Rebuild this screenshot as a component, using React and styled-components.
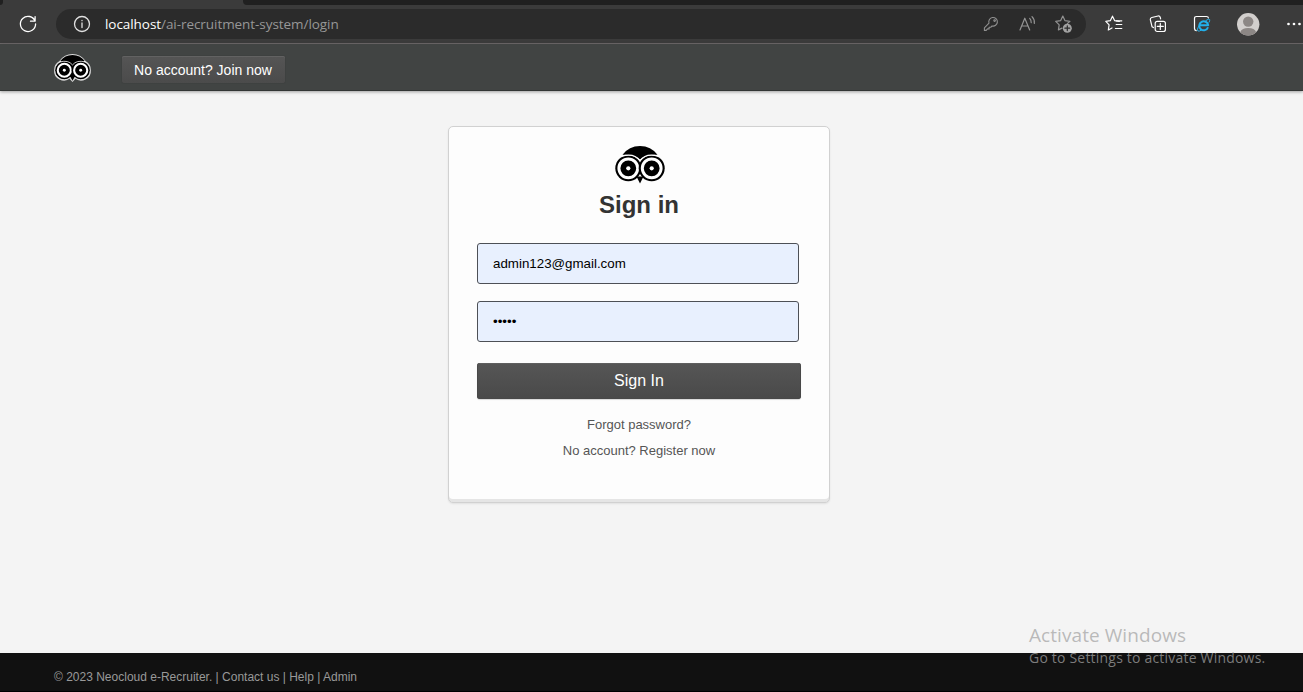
import React from "react";
import styled, { createGlobalStyle } from "styled-components";

const GlobalStyle = createGlobalStyle`
  * { box-sizing: border-box; }
  body { margin: 0; background: #f4f4f4; font-family: "Liberation Sans", Arial, sans-serif; overflow: hidden; }
`;

const Page = styled.div`
  position: relative;
  display: flex;
  flex-direction: column;
  width: 1303px;
  height: 692px;
  overflow: hidden;
`;

const TabStrip = styled.div`
  height: 5px;
  flex: none;
  display: flex;
  background: #3b3b3b;
`;

const InactiveTab = styled.div`
  width: ${(p) => p.$width};
  margin-left: ${(p) => (p.$last ? "auto" : 0)};
  background: #202020;
  border-radius: ${(p) => (p.$last ? "0 0 0 4px" : "0 0 3px 0")};
`;

const Toolbar = styled.div`
  height: 39px;
  flex: none;
  display: flex;
  align-items: center;
  padding-left: 19px;
  background: #3b3b3b;
  border-bottom: 1px solid #6d696a;
`;

const AddressBar = styled.div`
  width: 1030px;
  height: 30px;
  margin-left: 19px;
  padding: 0 13px 0 17px;
  display: flex;
  align-items: center;
  border-radius: 15px;
  background: #2b2b2b;
`;

const Url = styled.div`
  flex: 1;
  margin-left: 14px;
  font: 13.5px/20px "Open Sans", sans-serif;
  letter-spacing: -0.06px;
  color: #979797;
  white-space: nowrap;
`;

const Host = styled.span`
  color: #fff;
`;

const BarIcons = styled.div`
  display: flex;
  align-items: center;
  gap: 18px;
`;

const Actions = styled.div`
  display: flex;
  align-items: center;
  margin-left: 19px;
  gap: 26px;
`;

const Glyph = styled.svg`
  display: block;
  flex: none;
  overflow: visible;
  fill: none;
  stroke: ${(p) => p.$color || "#fff"};
  stroke-width: ${(p) => p.$weight || 1.2};
  stroke-linecap: round;
  stroke-linejoin: round;
`;

const OwlMark = styled.svg`
  display: block;
  flex: none;
  overflow: visible;
`;

const Header = styled.header`
  height: 47px;
  flex: none;
  display: flex;
  align-items: flex-start;
  padding: 11px 55px 0;
  background: #414443;
  border-bottom: 1px solid #333635;
  box-shadow: 0 1px 3px rgba(0, 0, 0, 0.35);
`;

const JoinButton = styled.button`
  width: 163px;
  height: 27px;
  margin: 1px 0 0 31.5px;
  padding: 0;
  border: 0;
  border-radius: 2px;
  background: linear-gradient(#555, #4b4b4b);
  box-shadow: inset 0 1px 0 #626262, 0 0 1px #303030;
  color: #fff;
  font: 14px/28px "Liberation Sans", Arial, sans-serif;
`;

const Main = styled.main`
  flex: 1;
  display: flex;
  justify-content: center;
  align-items: flex-start;
  padding: 35px 25px 0 0;
`;

const Card = styled.form`
  width: 382px;
  height: 377px;
  padding: 19px 28px 0;
  display: flex;
  flex-direction: column;
  align-items: center;
  background: #fdfdfd;
  border: 1px solid #d1d1d1;
  border-radius: 5px;
  box-shadow: inset 0 -3px 0 #e5e5e5, 0 1px 2px rgba(0, 0, 0, 0.08);
`;

const CardLogo = styled.div`
  padding-left: 1px;
`;

const Title = styled.h1`
  margin: 7px 0 0;
  font-size: 24px;
  line-height: 28px;
  color: #333;
`;

const Field = styled.input`
  align-self: flex-start;
  width: 322px;
  height: 41px;
  flex: none;
  margin: ${(p) => p.$top} 0 0;
  padding: 0 15px;
  border: 1px solid #4d5056;
  border-radius: 3px;
  outline: 0;
  background: #e8f0fe;
  color: #000;
  font: 13.333px "Liberation Sans", Arial, sans-serif;
`;

const SubmitButton = styled.button`
  width: 324px;
  height: 36px;
  flex: none;
  margin: 21px 0 0;
  padding: 0;
  border: 0;
  border-radius: 3px;
  background: linear-gradient(#565656, #494949);
  box-shadow: inset 0 1px 0 #5f5f5f, inset 0 0 0 1px #484848, 0 1px 1px rgba(0, 0, 0, 0.15);
  color: #fff;
  font: 16px/34px "Liberation Sans", Arial, sans-serif;
`;

const CardLink = styled.a`
  margin-top: ${(p) => p.$top};
  font-size: 13px;
  line-height: 16px;
  color: #555;
`;

const Footer = styled.footer`
  height: 39px;
  flex: none;
  padding: 16px 54px 0;
  background: #111;
  border-bottom: 1px solid #000;
  color: #999;
  font-size: 12px;
  line-height: 16px;
`;

const Watermark = styled.div`
  position: absolute;
  left: 1029px;
  top: 623px;
  color: rgba(145, 145, 145, 0.6);
  font-family: "Open Sans", sans-serif;
  white-space: nowrap;
`;

const WatermarkTitle = styled.div`
  font-size: 19px;
  line-height: 24px;
  letter-spacing: 0.07px;
`;

const WatermarkText = styled.div`
  font-size: 14px;
  line-height: 20px;
  margin-top: 1px;
  letter-spacing: 0.2px;
  color: rgba(155, 155, 155, 0.78);
`;

const STAR = "M7.5 1.2 9.7 5.7 14.3 6.4 M7.5 1.2 5.3 5.7.8 6.4 4.1 9.9 3.3 15 7 13";

function Owl({ width, height, outlined }) {
  return (
    <OwlMark width={width} height={height} viewBox="0 0 50 38" preserveAspectRatio="none">
      {outlined && (
        <path
          d="M7 10Q14 0 25 0T43 10Q50 14 50 22.3A12.8 12.8 0 0 1 29 33L25 37.5 21 33A12.8 12.8 0 0 1 0 22.3Q0 14 7 10Z"
          fill="#000"
          stroke="#d8d8d8"
          strokeWidth="2.6"
        />
      )}
      <path d="M7.5 8.8Q14 0 25 0T42.5 8.8Q31 8 25 13.5 19 8 7.5 8.8Z" />
      <path d="M21.5 30.5h7l-3.5 7z" />
      {[13.3, 36.7].map((x) => (
        <g key={x}>
          <circle cx={x} cy="22.3" r="13" />
          <circle cx={x} cy="22.3" r="9.4" fill="none" stroke="#fff" strokeWidth="3" />
          <circle cx={x} cy="22.3" r="2.1" fill="#fff" />
        </g>
      ))}
      <path d="M7 10.2Q19 6.8 25 14.5 31 6.8 43 10.2" fill="none" stroke="#fff" strokeWidth="1.1" />
    </OwlMark>
  );
}

function ReloadIcon() {
  return (
    <Glyph width="18" height="18" viewBox="0 0 18 18" $weight={1.3}>
      <path d="M16.1 6.2A7.6 7.6 0 1 0 16.6 9M16.1 1.6v4.6h-4.6" />
    </Glyph>
  );
}

function InfoIcon() {
  return (
    <Glyph width="18" height="18" viewBox="0 0 18 18" $color="#e0e0e0" $weight={1.3}>
      <circle cx="9" cy="9" r="7.5" />
      <path d="M9 8v4.5M9 5.3v.4" />
    </Glyph>
  );
}

function KeyIcon() {
  return (
    <Glyph width="18" height="18" viewBox="0 0 18 18" $color="#909090" $weight={1.1}>
      <path d="M6 8.2A4.3 4.3 0 1 1 9 11L7.7 12.3H6.1v1.6H4.5l-1.3 1.5H1.4v-2.6Z" />
      <circle cx="11.6" cy="5.6" r=".8" />
    </Glyph>
  );
}

function ReadAloudIcon() {
  return (
    <Glyph width="18" height="18" viewBox="0 0 18 18" $color="#949494" $weight={1.2}>
      <path d="M1 15 5.8 3.2 10.7 15M2.7 11h6.3M10.7 3.4q1.7 1.8 1.5 4.2M13 1.7q2.8 2.8 2.3 6.6" />
    </Glyph>
  );
}

function AddFavoriteIcon() {
  return (
    <Glyph width="18" height="18" viewBox="0 0 18 18" $color="#929292">
      <path d="m7.8 1 2.1 4.6 5 .7-2.6 2.3M7.8 1 5.7 5.6l-5 .7 3.5 3.6-.8 5 3.5-1.8" />
      <circle cx="12.3" cy="13.2" r="4.5" fill="#a2a2a2" stroke="none" />
      <path d="M12.3 10.8v4.8M9.9 13.2h4.8" stroke="#2b2b2b" />
    </Glyph>
  );
}

function FavoritesIcon() {
  return (
    <Glyph width="18" height="18" viewBox="0 0 18 18">
      <path d={STAR} />
      <path d="M11.2 9.5h5.6M11.2 5.8h5.6M10.4 13.5h6.4" />
    </Glyph>
  );
}

function CollectionsIcon() {
  return (
    <Glyph width="18" height="18" viewBox="0 0 18 18">
      <path d="M4.4 12.6 3.1 11.8 1.3 4.6Q1.1 3 2.8 2.5L9.1 1q1.6-.2 2.1 1.2l.4 1.7" />
      <rect x="6.2" y="6.3" width="10.2" height="10.2" rx="2" />
      <path d="M11.3 8.4v6M8.3 11.4h6" />
    </Glyph>
  );
}

function ExplorerModeIcon() {
  return (
    <Glyph width="18" height="18" viewBox="0 0 18 18">
      <path d="M3.2 15.6Q1.5 15.4 1.5 13.5V3.5Q1.5 1.5 3.5 1.5H13.4Q15.3 1.5 15.4 3" />
      <path d="M15 12.2A4.5 4.5 0 1 1 15.2 10.2H7" stroke="#22b0ea" strokeWidth="2" strokeLinecap="butt" />
      <path d="M6 10.8Q3.4 15 4.9 16 6.2 16.6 8.6 15M13 5.4Q16.2 3.4 16.7 4.6 17 5.4 16.1 7.2" stroke="#22b0ea" strokeWidth="1" />
    </Glyph>
  );
}

function Avatar() {
  return (
    <svg width="23" height="23" viewBox="0 0 23 23">
      <circle cx="11.2" cy="11.3" r="11.2" fill="#d2cfcd" />
      <circle cx="11.2" cy="8.6" r="5.2" fill="#8c8785" />
      <path d="M3.2 19.2Q4.9 15.1 11.2 15.1T19.2 19.2A11.3 11.3 0 0 1 3.2 19.2Z" fill="#8c8785" />
    </svg>
  );
}

function MoreIcon() {
  return (
    <svg width="17" height="4" viewBox="0 0 17 4" fill="#fff">
      <circle cx="2.5" cy="2" r="1.35" />
      <circle cx="8" cy="2" r="1.35" />
      <circle cx="13.5" cy="2" r="1.35" />
    </svg>
  );
}

export default function App() {
  return (
    <Page>
      <GlobalStyle />
      <TabStrip>
        <InactiveTab $width="3px" />
        <InactiveTab $width="1060px" $last />
      </TabStrip>
      <Toolbar>
        <ReloadIcon />
        <AddressBar>
          <InfoIcon />
          <Url><Host>localhost</Host>/ai-recruitment-system/login</Url>
          <BarIcons>
            <KeyIcon />
            <ReadAloudIcon />
            <AddFavoriteIcon />
          </BarIcons>
        </AddressBar>
        <Actions>
          <FavoritesIcon />
          <CollectionsIcon />
          <ExplorerModeIcon />
          <Avatar />
          <MoreIcon />
        </Actions>
      </Toolbar>
      <Header>
        <Owl width={35} height={26} outlined />
        <JoinButton>No account? Join now</JoinButton>
      </Header>
      <Main>
        <Card>
          <CardLogo>
            <Owl width={50} height={38} />
          </CardLogo>
          <Title>Sign in</Title>
          <Field $top="24px" type="text" defaultValue="admin123@gmail.com" />
          <Field $top="17px" type="password" defaultValue="admin" />
          <SubmitButton type="button">Sign In</SubmitButton>
          <CardLink $top="18px">Forgot password?</CardLink>
          <CardLink $top="10px">No account? Register now</CardLink>
        </Card>
      </Main>
      <Footer>© 2023 Neocloud e-Recruiter. | Contact us | Help | Admin</Footer>
      <Watermark>
        <WatermarkTitle>Activate Windows</WatermarkTitle>
        <WatermarkText>Go to Settings to activate Windows.</WatermarkText>
      </Watermark>
    </Page>
  );
}
